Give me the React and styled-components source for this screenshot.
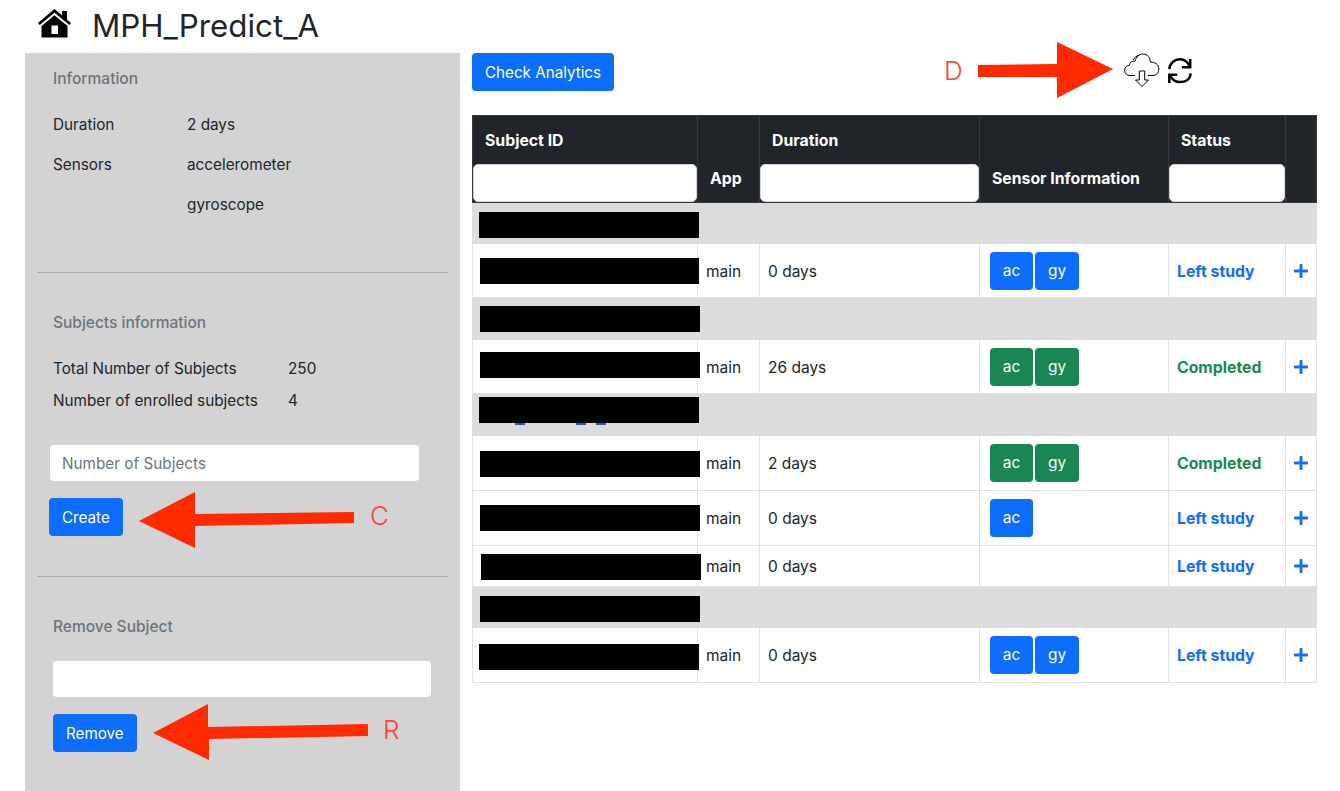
import React from "react";
import styled, { createGlobalStyle } from "styled-components";

const Global = createGlobalStyle`
  html, body { margin: 0; padding: 0; background: #fff; }
  body { font-family: Inter, "Liberation Sans", sans-serif; font-size: 16px; color: #212529; line-height: 24px; }
  * { box-sizing: border-box; }
`;

const Page = styled.div`position: relative; width: 1340px; height: 791px; overflow: hidden;`;
const Header = styled.header`display: flex; align-items: center; height: 53px; padding-left: 38px; gap: 21px;`;
const HomeSvg = styled.svg`flex: none; width: 33px; height: 29px; margin-top: -7px;`;
const Title = styled.h1`margin: 0; font-size: 31.3px; font-weight: 400; line-height: 53px;`;
const Main = styled.div`display: flex; height: 738px;`;
const Sidebar = styled.aside`width: 435px; margin-left: 25px; background: #d3d3d3; padding: 14px 12px 0; flex: none;`;
const InfoSection = styled.section`height: 205px; padding-left: 16px;`;
const Section = styled.section`height: ${p => p.$h}px; padding-top: 38px;`;
const Muted = styled.div`color: #6c757d; font-weight: 500; font-size: 15.5px; padding-left: ${p => p.$pl || 0}px;`;
const InfoRow = styled.div`
  display: grid; grid-template-columns: ${p => p.$col}px 1fr; height: ${p => p.$h}px; align-items: center; font-size: 15.3px;
  padding-left: ${p => p.$pl || 0}px; margin-top: ${p => p.$mt || 0}px;
`;
const Rule = styled.hr`margin: 0; border: 0; border-top: 1px solid #a9a9a9; height: 1px;`;
const Field = styled.input`
  display: block; width: ${p => p.$w}px; height: 36px; margin: ${p => p.$mt}px 0 0 ${p => p.$ml}px; border: 0; border-radius: 4px;
  background: #fff; padding: 0 12px; font: 15.3px Inter, sans-serif; color: #212529;
  &::placeholder { color: #6c757d; opacity: 1; }
`;
const Btn = styled.button`
  display: block; height: 38px; padding: 0 13px; margin: ${p => p.$mt || 0}px 0 0 ${p => p.$ml || 0}px; border: 0; border-radius: 4px;
  background: #0d6efd; color: #fff; font: 15.2px Inter, sans-serif;
`;
const Content = styled.div`flex: 1; padding-left: 12px;`;
const Toolbar = styled.div`display: flex; align-items: flex-start; height: 62px;`;
const IconGroup = styled.div`display: flex; align-items: flex-start; margin-left: 510px; gap: 7px;`;
const CloudSvg = styled.svg`display: block; width: 36px; height: 36px;`;
const RefreshSvg = styled.svg`display: block; width: 26px; height: 29px; margin-top: 3px;`;
const Table = styled.table`border-collapse: collapse; table-layout: fixed; width: 844px; font-size: 15.5px;`;
const Th = styled.th`
  background: #212529; color: #fff; border: 1px solid #373b3e; font-size: 15.8px; font-weight: 700; text-align: left;
  padding: 0; vertical-align: ${p => p.$end ? "bottom" : "top"}; height: 87px;
`;
const ThLabel = styled.div`padding: ${p => p.$end ? "0 12px 11px" : "13px 12px 0"}; height: ${p => p.$end ? "auto" : "48px"};`;
const ThInput = styled.input`display: block; width: 100%; height: 38px; border: 1px solid #ced4da; border-radius: 5px; background: #fff; padding: 0;`;
const Tr = styled.tr`height: ${p => p.$h}px; background: ${p => p.$group ? "#dcdcdc" : "#fff"};`;
const Td = styled.td`
  border: 1px solid ${p => p.$group ? "#dcdcdc" : "#dee2e6"}; padding: 2px 8px 0; position: relative; white-space: nowrap; overflow: visible;
`;
const SensorTd = styled(Td)`padding: 0 8px 0 10px;`;
const GroupEnd = styled(Td)`border-left-color: #d5d5d5;`;
const Redact = styled.div`
  position: absolute; left: ${p => p.$x}px; top: ${p => p.$y}px; width: ${p => p.$w}px; height: 26px; background: #000; z-index: 2;
`;
const Hint = styled.span`
  position: absolute; left: ${p => p.$x}px; top: 29px; width: 10px; height: 2px; background: #0d5fe0;
`;
const Badge = styled.span`
  display: inline-flex; align-items: center; justify-content: center; width: ${p => p.$w}px; height: 38px; margin-right: 2px; border-radius: 4px;
  background: ${p => p.$ok ? "#198754" : "#0d6efd"}; color: #fff; font-size: 15.5px; vertical-align: middle;
`;
const Status = styled.span`font-weight: 700; font-size: 15.8px; color: ${p => p.$ok ? "#198754" : "#0d6efd"};`;
const Plus = styled.svg`display: block; width: 14px; height: 14px; margin-top: -2px;`;
const Layer = styled.svg`position: absolute; left: 0; top: 0; pointer-events: none;`;
const Letter = styled.span`
  position: absolute; left: ${p => p.$x}px; top: ${p => p.$y}px; font-size: 26px; line-height: 30px; font-weight: 300; color: #ff4338;
`;

const HomeIcon = () => (
  <HomeSvg viewBox="0 0 33 29" aria-hidden="true">
    <path fill="#000" d="M16.5 0 L24 6.3 V2 H29 V10.6 L33 14 L31.3 16 L16.5 3.8 L1.7 16 L0 14 Z" />
    <path fill="#000" fillRule="evenodd" d="M16.5 6.3 L29.5 17 V28.5 H3.5 V17 Z M13.5 16.5 V25 H20 V16.5 Z" />
  </HomeSvg>
);

const CloudIcon = () => (
  <CloudSvg viewBox="0 0 36 36" fill="none" stroke="#000" strokeWidth="1" aria-hidden="true">
    <path d="M11 22.5 H6 C2.6 22.5 .7 20.2 .7 17.4 C.7 14.4 2.8 12.4 5.4 12.2 C5.6 9.4 8.2 7.6 10.8 8.4 C12.4 3.6 15.4 1 18.7 1 C23.6 1 26.3 4.6 26.4 9.2 C30.8 8.8 34.8 11.6 34.8 16 C34.8 20.2 32.2 22.5 29 22.5 H24" />
    <path d="M9 7 C10.4 4.4 12.6 2.6 15.4 2.2" />
    <path d="M15.3 18 H20.7 V27 H24.5 L18 33.6 L11.5 27 H15.3 Z" />
  </CloudSvg>
);

const RefreshIcon = () => (
  <RefreshSvg viewBox="0 0 28 31" fill="none" stroke="#000" strokeWidth="2.7" aria-hidden="true">
    <path d="M2.5 14 C3 7.5 8 3.5 14 3.5 C18.5 3.5 22 6 24.5 11" />
    <path d="M25 3 V12 H16" />
    <path d="M25.5 18.5 C25 25 20 28 14 28 C9.5 28 6 26 3.2 21" />
    <path d="M2.5 29 V20 H11" />
  </RefreshSvg>
);

const PlusIcon = () => (
  <Plus viewBox="0 0 14 14" aria-hidden="true"><path d="M7 1 V13 M1 7 H13" stroke="#0d6efd" strokeWidth="2.8" strokeLinecap="round" /></Plus>
);

const rows = [
  { group: true, h: 41, r: [6, 9, 220] },
  { h: 54, r: [7, 14, 219], app: "main", dur: "0 days", b: ["ac", "gy"], st: "Left study" },
  { group: true, h: 42, r: [7, 8, 220] },
  { h: 54, r: [7, 12, 220], app: "main", dur: "26 days", b: ["ac", "gy"], st: "Completed", ok: true },
  { group: true, h: 42, r: [6, 3, 220], hints: true },
  { h: 55, r: [7, 15, 220], app: "main", dur: "2 days", b: ["ac", "gy"], st: "Completed", ok: true },
  { h: 55, r: [7, 14, 220], app: "main", dur: "0 days", b: ["ac"], st: "Left study" },
  { h: 41, r: [8, 8, 220], app: "main", dur: "0 days", b: [], st: "Left study" },
  { group: true, h: 41, r: [7, 9, 220] },
  { h: 55, r: [6, 16, 220], app: "main", dur: "0 days", b: ["ac", "gy"], st: "Left study" },
];

export default function App() {
  return (
    <Page>
      <Global />
      <Header>
        <HomeIcon />
        <Title>MPH_Predict_A</Title>
      </Header>
      <Main>
        <Sidebar>
          <InfoSection>
            <Muted>Information</Muted>
            <InfoRow $col={134} $h={40} $mt={14}><span>Duration</span><span>2 days</span></InfoRow>
            <InfoRow $col={134} $h={40}><span>Sensors</span><span>accelerometer</span></InfoRow>
            <InfoRow $col={134} $h={40}><span /><span>gyroscope</span></InfoRow>
          </InfoSection>
          <Rule />
          <Section $h={303}>
            <Muted $pl={16}>Subjects information</Muted>
            <InfoRow $col={235} $h={32} $pl={16} $mt={18}><span>Total Number of Subjects</span><span>250</span></InfoRow>
            <InfoRow $col={235} $h={32} $pl={16}><span>Number of enrolled subjects</span><span>4</span></InfoRow>
            <Field $w={369} $ml={13} $mt={28} placeholder="Number of Subjects" />
            <Btn $ml={12} $mt={17}>Create</Btn>
          </Section>
          <Rule />
          <Section $h={220}>
            <Muted $pl={16}>Remove Subject</Muted>
            <Field $w={378} $ml={16} $mt={22} />
            <Btn $ml={16} $mt={17}>Remove</Btn>
          </Section>
        </Sidebar>
        <Content>
          <Toolbar>
            <Btn>Check Analytics</Btn>
            <IconGroup>
              <CloudIcon />
              <RefreshIcon />
            </IconGroup>
          </Toolbar>
          <Table>
            <colgroup>
              <col width="225" /><col width="62" /><col width="220" /><col width="189" /><col width="117" /><col width="31" />
            </colgroup>
            <thead>
              <tr>
                <Th><ThLabel>Subject ID</ThLabel><ThInput /></Th>
                <Th $end><ThLabel $end>App</ThLabel></Th>
                <Th><ThLabel>Duration</ThLabel><ThInput /></Th>
                <Th $end><ThLabel $end>Sensor Information</ThLabel></Th>
                <Th><ThLabel>Status</ThLabel><ThInput /></Th>
                <Th />
              </tr>
            </thead>
            <tbody>
              {rows.map((r, i) => (
                <Tr key={i} $h={r.h} $group={r.group}>
                  <Td $group={r.group}>
                    <Redact $x={r.r[0]} $y={r.r[1]} $w={r.r[2]} />
                    {r.hints && [42, 103, 123].map(x => <Hint key={x} $x={x} />)}
                  </Td>
                  <Td $group={r.group}>{r.app}</Td>
                  <Td $group={r.group}>{r.dur}</Td>
                  <SensorTd $group={r.group}>
                    {(r.b || []).map(b => <Badge key={b} $ok={r.ok} $w={b === "ac" ? 43 : 44}>{b}</Badge>)}
                  </SensorTd>
                  <Td $group={r.group}>{r.st && <Status $ok={r.ok}>{r.st}</Status>}</Td>
                  {r.group ? <GroupEnd $group /> : <Td><PlusIcon /></Td>}
                </Tr>
              ))}
            </tbody>
          </Table>
        </Content>
      </Main>
      <Layer width="1340" height="791" aria-hidden="true">
        <g fill="#ff2a00">
          <polygon points="978,65 1057,64 1057,42 1113,69 1057,98 1057,77 978,77" />
          <polygon points="354,512 195,514 195,492 139,521 195,548 195,526 354,523" />
          <polygon points="368,724 208,727 208,704 153,733 209,760 209,739 368,736" />
        </g>
      </Layer>
      <Letter $x={944} $y={56}>D</Letter>
      <Letter $x={370} $y={501}>C</Letter>
      <Letter $x={383} $y={715}>R</Letter>
    </Page>
  );
}
